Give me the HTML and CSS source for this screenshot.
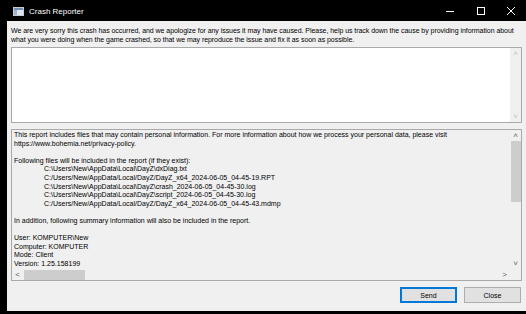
FILE: index.html
```html
<!DOCTYPE html>
<html lang="en">
<head>
    <meta charset="UTF-8">
    <title>Crash Reporter</title>
    <link rel="stylesheet" href="styles.css">
</head>
<body>
    <div class="titlebar">
        <svg class="app-icon" width="11" height="9" viewBox="0 0 11 9">
            <rect x="0.5" y="0.5" width="10" height="8" fill="#dfe6ee" stroke="#c8ccd2"/>
            <rect x="1" y="1" width="9" height="2" fill="#6f8fb5"/>
            <rect x="1" y="3" width="3" height="5" fill="#9fb4cc"/>
        </svg>
        <div class="title">Crash Reporter</div>
        <div class="win-buttons">
            <svg width="30" height="21" viewBox="0 0 30 21"><line x1="10" y1="11.5" x2="18" y2="11.5" stroke="#fff" stroke-width="1"/></svg>
            <svg width="30" height="21" viewBox="0 0 30 21"><rect x="11.5" y="7.5" width="7" height="7" fill="none" stroke="#fff" stroke-width="1"/></svg>
            <svg width="30" height="21" viewBox="0 0 30 21"><path d="M11 7 L19 15 M19 7 L11 15" stroke="#fff" stroke-width="1"/></svg>
        </div>
    </div>

    <div class="window">
        <p class="intro">We are very sorry this crash has occurred, and we apologize for any issues it may have caused. Please, help us track down the cause by providing information about what you were doing when the game crashed, so that we may reproduce the issue and fix it as soon as possible.</p>

        <div class="box user-input">
            <div class="box-body"></div>
            <div class="vscroll disabled">
                <span class="arrow">&#708;</span>
                <span class="track"></span>
                <span class="arrow">&#709;</span>
            </div>
        </div>

        <div class="box report">
            <div class="box-body report-text">
                <div>This report includes files that may contain personal information. For more information about how we process your personal data, please visit</div>
                <div>https://www.bohemia.net/privacy-policy.</div>
                <div class="blank"></div>
                <div>Following files will be included in the report (if they exist):</div>
                <div class="path">C:\Users\New\AppData\Local\DayZ\dxDiag.txt</div>
                <div class="path">C:/Users/New/AppData/Local/DayZ/DayZ_x64_2024-06-05_04-45-19.RPT</div>
                <div class="path">C:\Users\New\AppData\Local\DayZ\crash_2024-06-05_04-45-30.log</div>
                <div class="path">C:\Users\New\AppData\Local\DayZ\script_2024-06-05_04-45-30.log</div>
                <div class="path">C:/Users/New/AppData/Local/DayZ/DayZ_x64_2024-06-05_04-45-43.mdmp</div>
                <div class="blank"></div>
                <div>In addition, following summary information will also be included in the report.</div>
                <div class="blank"></div>
                <div>User: KOMPUTER\New</div>
                <div>Computer: KOMPUTER</div>
                <div>Mode: Client</div>
                <div>Version: 1.25.158199</div>
            </div>
            <div class="vscroll">
                <span class="arrow">&#708;</span>
                <span class="track"><span class="thumb"></span></span>
                <span class="arrow">&#709;</span>
            </div>
            <div class="hscroll">
                <span class="arrow">&#706;</span>
                <span class="track"><span class="thumb"></span></span>
                <span class="arrow">&#707;</span>
            </div>
            <div class="corner"></div>
        </div>

        <div class="actions">
            <button class="btn default">Send</button>
            <button class="btn">Close</button>
        </div>
    </div>
</body>
</html>
```

FILE: styles.css
```css
body {
    margin: 0;
    background: #000;
    font-family: 'Liberation Sans', Arial, sans-serif;
    font-size: 7px;
    color: #000;
    width: 526px;
    height: 314px;
    overflow: hidden;
}

.titlebar {
    height: 21px;
    display: flex;
    align-items: center;
    color: #fff;
    padding-left: 13px;
}

.app-icon {
    margin-top: 2px;
}

.title {
    font-size: 8px;
    margin-left: 5px;
    margin-top: 1px;
}

.win-buttons {
    margin-left: auto;
    display: flex;
}

.window {
    margin-left: 7px;
    height: 290px;
    background: #f0f0f0;
    padding: 5px 4px 0 4px;
    box-sizing: border-box;
    display: flex;
    flex-direction: column;
}

.intro {
    margin: 0;
    line-height: 9.4px;
    height: 21px;
    letter-spacing: -0.05px;
}

.box {
    border: 1px solid #a9a9a9;
    display: grid;
    grid-template-columns: 1fr 11px;
    box-sizing: border-box;
}

.user-input {
    height: 76px;
    background: #fff;
}

.report {
    margin-top: 6px;
    height: 152px;
    background: #f0f0f0;
    grid-template-rows: 1fr 11px;
}

.box-body {
    overflow: hidden;
}

.report-text {
    padding: 1px 0 0 2px;
    line-height: 8.6px;
    white-space: nowrap;
}

.report-text .blank {
    height: 8.6px;
}

.report-text .path {
    padding-left: 30px;
}

.vscroll {
    display: flex;
    flex-direction: column;
    background: #f0f0f0;
    color: #606060;
}

.vscroll .arrow,
.hscroll .arrow {
    height: 11px;
    font-size: 8px;
    line-height: 11px;
    text-align: center;
    flex: none;
}

.vscroll.disabled {
    color: #bfbfbf;
}

.vscroll .track {
    flex: 1;
    position: relative;
}

.vscroll .thumb {
    position: absolute;
    left: 1px;
    right: 0;
    top: 0;
    height: 61px;
    background: #cdcdcd;
}

.hscroll {
    display: flex;
    background: #f0f0f0;
    color: #606060;
}

.hscroll .arrow {
    width: 11px;
}

.hscroll .track {
    flex: 1;
    position: relative;
}

.hscroll .thumb {
    position: absolute;
    left: 1px;
    top: 1px;
    bottom: 0;
    width: 61px;
    background: #cdcdcd;
}

.corner {
    background: #f0f0f0;
}

.actions {
    display: flex;
    justify-content: flex-end;
    gap: 7px;
    margin-top: 6px;
    padding-right: 1px;
}

.btn {
    width: 57px;
    height: 16px;
    padding: 0;
    background: #e1e1e1;
    border: 1px solid #adadad;
    font-family: inherit;
    font-size: 7px;
    color: #000;
}

.btn.default {
    border: 1px solid #0078d7;
    box-shadow: inset 0 0 0 1px #0078d7;
}
```
